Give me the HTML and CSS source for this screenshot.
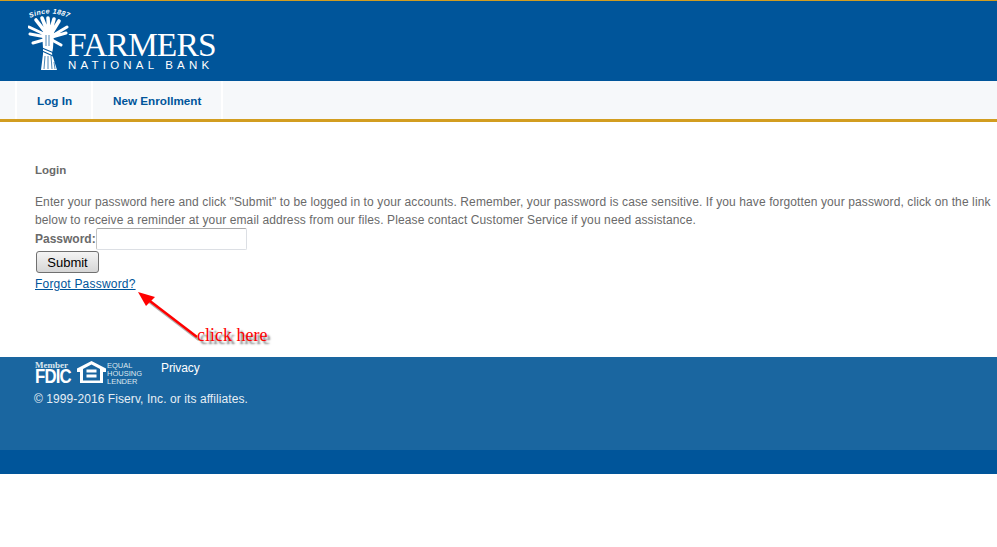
FILE: index.html
```html
<!DOCTYPE html>
<html>
	<head>
		<meta charset="utf-8">
		<title>Farmers National Bank - Login</title>
		<link rel="stylesheet" href="styles.css">
	</head>
	<body>
		<header class="banner">
			<div class="logo">
				<svg class="sheaf" width="62" height="64" viewBox="0 0 62 64">
					<defs>
						<path id="since-arc" d="M2 10 Q21 1 41 10"></path>
					</defs>
					<text font-family="Liberation Sans" font-style="italic" font-weight="bold" font-size="7" fill="#fff" letter-spacing="0.4"><textPath href="#since-arc">Since 1887</textPath></text>
					<g fill="none" stroke="#fff" stroke-linecap="round">
						<path stroke-width="3.600" d="M19 26 L8 12 M20 25 L14 10 M21 25 L20 10 M22 25 L26 11 M23 26 L31 13"></path>
						<path stroke-width="3" d="M18 27 L1 19 M18 29 L2 26 M19 31 L5 35 M24 28 L39 19 M24 29 L38 25 M24 32 L33 37"></path>
					</g>
					<path fill="#fff" d="M14 24 L26 24 L25 40 L24 46 L29 62 L13 62 L15 46 L15 40 Z"></path>
					<g stroke="#00559a" stroke-width="0.7">
						<path d="M17 48 L16 61 M20 48 L20 61 M23 48 L24 61 M26 54 L27 61"></path>
						<path d="M18 27 L18 38 M21 27 L21 38"></path>
					</g>
					<path fill="none" stroke="#00559a" stroke-width="1.1" d="M14 40 L26 45 M14 43 L25 48"></path>
				</svg>
				<div class="wordmark">
					<div class="farmers">FARMERS</div>
					<div class="national">NATIONAL BANK</div>
				</div>
			</div>
		</header>
		<nav class="tabs">
			<a class="tab tab-login" href="#">Log In</a>
			<a class="tab tab-enroll" href="#">New Enrollment</a>
		</nav>
		<main class="content">
			<h1>Login</h1>
			<p>Enter your password here and click "Submit" to be logged in to your accounts. Remember, your password is case sensitive. If you have forgotten your password, click on the link below to receive a reminder at your email address from our files. Please contact Customer Service if you need assistance.</p>
			<div class="field">
				<label for="pw">Password:</label>
				<input id="pw" type="password">
			</div>
			<button class="submit" type="button">Submit</button>
			<a class="forgot" href="#">Forgot Password?</a>
			<svg class="arrow" width="70" height="60" viewBox="0 0 70 60">
				<path d="M9 7 L60 46" fill="none" stroke="#000" stroke-opacity="0.3" stroke-width="2.5" transform="translate(2 3)"></path>
				<path d="M9 7 L60 46" fill="none" stroke="#f00" stroke-width="2.5"></path>
				<path d="M1 1 L18 6 L9 15 Z" fill="#f00"></path>
			</svg>
			<span class="note">click here</span>
		</main>
		<footer class="site-footer">
			<div class="footer-main">
				<div class="badges">
					<div class="fdic">
						<div class="fdic-member">Member</div>
						<div class="fdic-name">FDIC</div>
					</div>
					<svg class="house" width="29" height="22" viewBox="0 0 29 22">
						<path fill="#fff" fill-rule="evenodd" d="M14.500 0 L29 7.500 L29 11 L26 11 L26 22 L3 22 L3 11 L0 11 L0 7.500 Z M14.500 3.500 L6 8 L6 19.500 L23 19.500 L23 8 Z M9.500 8.500 H19.500 V11.500 H9.500 Z M9.500 13.500 H19.500 V16.500 H9.500 Z"></path>
					</svg>
					<div class="ehl">EQUAL<br>HOUSING<br>LENDER</div>
					<a class="privacy" href="#">Privacy</a>
				</div>
				<div class="copyright">© 1999-2016 Fiserv, Inc. or its affiliates.</div>
			</div>
			<div class="footer-bar"></div>
		</footer>
	</body>
</html>
```

FILE: styles.css
```css
* {
	margin: 0;
	padding: 0;
	box-sizing: border-box;
}
body {
	font-family: "Liberation Sans", Arial, sans-serif;
	font-size: 12px;
	color: #6a6a6a;
	background: #fff;
}
.banner {
	height: 81px;
	background: #00559a;
	border-top: 1px solid #d29d20;
	padding: 7px 0 0 28px;
}
.logo {
	display: flex;
	color: #fff;
}
.sheaf {
	flex: none;
}
.wordmark {
	margin: 24px 0 0 -22px;
}
.farmers {
	font-family: "Liberation Serif", serif;
	font-size: 33.500px;
	line-height: 26px;
	letter-spacing: -0.9px;
}
.national {
	font-size: 11.500px;
	line-height: 12px;
	letter-spacing: 4.2px;
	margin-top: 1px;
	white-space: nowrap;
}
.tabs {
	display: flex;
	height: 41px;
	background: #f6f8fa;
	border-bottom: 3px solid #d29d20;
	padding-left: 15px;
}
.tab {
	display: block;
	height: 38px;
	line-height: 39px;
	font-size: 11.700px;
	font-weight: bold;
	color: #00559a;
	text-decoration: none;
	border-left: 2px solid #fff;
}
.tab-login {
	width: 76px;
	padding-left: 20px;
}
.tab-enroll {
	width: 132px;
	padding-left: 20px;
	border-right: 2px solid #fff;
}
.content {
	position: relative;
	height: 235px;
	padding: 41px 0 0 35px;
}
h1 {
	font-size: 11.500px;
	font-weight: bold;
	line-height: 14px;
	margin-bottom: 16px;
}
p {
	line-height: 18px;
	font-size: 12px;
	letter-spacing: 0.11px;
}
.field {
	display: flex;
	align-items: center;
	height: 22px;
	margin-top: -1px;
}
label {
	font-size: 12px;
	font-weight: bold;
}
input {
	width: 151px;
	height: 22px;
	border: 1px solid #dcdfe4;
	border-top-color: #aaa;
	border-left-color: #c4c4c4;
	border-radius: 2px;
	background: #fff;
}
.submit {
	display: block;
	width: 63px;
	height: 22px;
	margin: 1px 0 0 1px;
	font-family: "Liberation Sans", Arial, sans-serif;
	font-size: 13px;
	color: #000;
	border: 1px solid #707070;
	border-radius: 3px;
	background: linear-gradient(#f4f4f4, #d6d6d6);
}
.forgot {
	display: block;
	margin-top: 4px;
	font-size: 12px;
	line-height: 14px;
	letter-spacing: 0.2px;
	color: #00559a;
}
.arrow {
	position: absolute;
	left: 137px;
	top: 169px;
}
.note {
	position: absolute;
	left: 197px;
	top: 203px;
	font-family: "Liberation Serif", serif;
	font-size: 18px;
	color: #f00;
	text-shadow: 3px 3px 2px #777;
}
.site-footer {
	color: #fff;
}
.footer-main {
	height: 93px;
	background: #1a66a0;
	padding: 4px 0 0 35px;
}
.badges {
	display: flex;
	align-items: flex-start;
	height: 27px;
}
.fdic {
	width: 37px;
	font-weight: bold;
}
.fdic-member {
	font-family: "Liberation Serif", serif;
	font-size: 9px;
	line-height: 8px;
	color: #dce6ef;
}
.fdic-name {
	font-size: 20px;
	line-height: 15px;
	letter-spacing: -1px;
	transform: scaleX(0.84);
	transform-origin: left top;
}
.house {
	margin: 0 0 0 5px;
	flex: none;
}
.ehl {
	margin: 1px 0 0 1px;
	width: 54px;
	font-size: 7.500px;
	line-height: 8px;
	color: #dce6ef;
}
.privacy {
	font-size: 12px;
	line-height: 14px;
	letter-spacing: -0.1px;
	color: #fff;
	text-decoration: none;
}
.copyright {
	margin: 4px 0 0 -1px;
	font-size: 12px;
	line-height: 14px;
	letter-spacing: 0.08px;
	color: #e6eef5;
}
.footer-bar {
	height: 24px;
	background: #00559a;
}
```
